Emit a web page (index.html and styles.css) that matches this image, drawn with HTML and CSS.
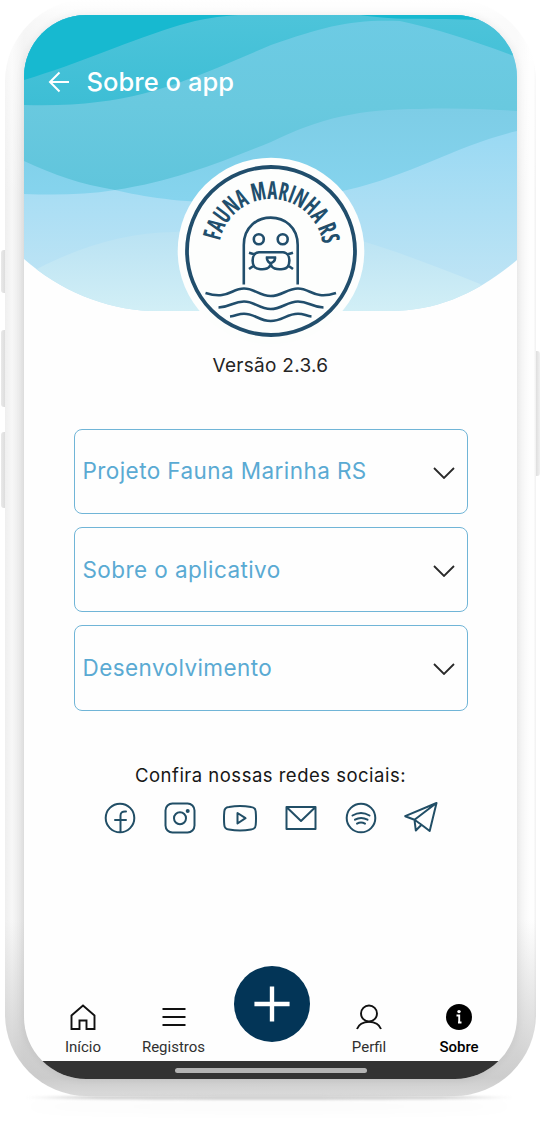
FILE: index.html
```html
<!DOCTYPE html>
<html lang="pt-BR">
<head>
<meta charset="utf-8">
<title>Sobre o app</title>
<link rel="stylesheet" href="styles.css">
</head>
<body>
<div class="phone">
  <i class="key key-mute"></i><i class="key key-up"></i><i class="key key-down"></i><i class="key key-power"></i>
  <div class="frame">
  <div class="screen">
    <header class="hero">
      <svg class="waves" viewBox="24 15 493 297" aria-hidden="true">
        <defs>
          <linearGradient id="mid" x1="0" y1="130" x2="0" y2="300" gradientUnits="userSpaceOnUse"><stop stop-color="#99d9f3"/><stop offset="1" stop-color="#c2e5f5"/></linearGradient>
          <linearGradient id="pale" x1="0" y1="230" x2="0" y2="312" gradientUnits="userSpaceOnUse"><stop stop-color="#b9e2f3"/><stop offset="1" stop-color="#d2eff6"/></linearGradient>
          <linearGradient id="sky" x1="0" y1="108" x2="0" y2="200" gradientUnits="userSpaceOnUse"><stop stop-color="#7dcde6"/><stop offset="1" stop-color="#86d4ee"/></linearGradient>
          <linearGradient id="sea" x1="0" y1="20" x2="0" y2="190" gradientUnits="userSpaceOnUse"><stop stop-color="#6dcbe4"/><stop offset=".5" stop-color="#69c9df"/><stop offset="1" stop-color="#60c5dc"/></linearGradient>
          <linearGradient id="teal" x1="0" y1="15" x2="0" y2="105" gradientUnits="userSpaceOnUse"><stop stop-color="#4dc4da"/><stop offset="1" stop-color="#3dbed5"/></linearGradient>
          <clipPath id="bowl"><path d="M24 15H517V260C478 293 437 311 390 311H150C105 309 60 291 24 259Z"/></clipPath>
        </defs>
        <g clip-path="url(#bowl)">
          <path fill="url(#mid)" d="M24 15H517V312H24Z"/>
          <path fill="url(#pale)" d="M24 276C70 250 122 232 175 232C260 222 325 232 365 242C405 254 445 270 480 284L500 312H24Z"/>
          <path fill="url(#sky)" d="M24 100V194C55 195 85 195 115 190C165 202 245 211 347 190C412 175 458 145 517 131V100Z"/>
          <path fill="url(#sea)" d="M24 15V161C54 175 80 184 115 190C175 181 221 162 271 142C320 118 360 109 420 109C455 108 485 109 517 111V15Z"/>
          <path fill="url(#teal)" d="M24 15V105C118 108 167 88 217 68L271 45C325 26 353 19 400 21C437 29 471 40 517 57V15Z"/>
          <path fill="#17b9d0" d="M24 15V80C78 64 133 39 180 25C200 19 220 16 238 15ZM360 15C400 21 430 18 480 20L490 15Z"/>
        </g>
      </svg>
      <div class="title-row">
        <svg class="back" viewBox="0 0 22 22"><path d="M21 11H2M11.5 1.5 2 11l9.5 9.5"/></svg>
        <h1>Sobre o app</h1>
      </div>
      <svg class="logo" viewBox="177 157 188 188" role="img" aria-label="Fauna Marinha RS">
        <circle cx="271" cy="251" r="93.3" fill="#fdfefd"/>
        <g class="ink">
          <circle cx="271" cy="251" r="84" stroke-width="3.8"/>
          <path d="M243.8 284.5V245C243.8 208.5 297.7 208.5 297.7 245V284.5"/>
          <circle cx="258.8" cy="239.3" r="5"/><circle cx="282.7" cy="239.3" r="5"/>
          <path d="M259 252.2H283C291.5 252.5 291.5 268.7 283 269C277 269.7 271 269 270.7 263C270.4 269 264.5 269.7 259 269C250.5 268.7 250.5 252.5 259 252.2ZM267 257.5H275C275.5 261 272 263 270.8 263C269.5 263 266.5 261 267 257.5ZM249 252.7 255 254.5M249 269 254 265.5M293 252.7 287 254.5M293 269 288 265.5"/>
          <path d="M205.5 293C228 300 231 288.5 244 288.5C255 288.5 259 296 270.7 296C282 296 287 288.5 298 288.5C311 288.5 314 300 336 293M218.5 307.5C231 307 233 301.5 244 301.5C255 301.5 259 309 270.7 309C282 309 287 301.5 298 301.5C309 301.5 311 307 323.5 307.5M230 316.5C236 316 238 313.7 244 313.7C255 313.7 259 321 270.7 321C282 321 287 313.7 298 313.7C304 313.7 306 316 311.5 316.5"/>
        </g>
        <path id="arc" fill="none" d="M220 241A52 52 0 0 1 322 241L325 256"/>
        <text class="logo-text" textLength="146" lengthAdjust="spacingAndGlyphs"><textPath href="#arc">FAUNA MARINHA RS</textPath></text>
      </svg>
    </header>
    <main>
      <p class="version">Versão 2.3.6</p>
      <div class="panels">
        <button class="panel"><span>Projeto Fauna Marinha RS</span><svg class="chev" viewBox="0 0 22 12"><path d="m1 1 10 10L21 1"/></svg></button>
        <button class="panel"><span>Sobre o aplicativo</span><svg class="chev" viewBox="0 0 22 12"><path d="m1 1 10 10L21 1"/></svg></button>
        <button class="panel"><span>Desenvolvimento</span><svg class="chev" viewBox="0 0 22 12"><path d="m1 1 10 10L21 1"/></svg></button>
      </div>
      <p class="follow">Confira nossas redes sociais:</p>
      <div class="social">
        <svg viewBox="0 0 34 34"><circle cx="17" cy="17" r="14.3"/><path d="M17.5 31V14.5Q17.500 10 23 10.500M12 19H23"/></svg>
        <svg viewBox="0 0 34 34"><rect x="2.5" y="2.5" width="29" height="29" rx="7"/><circle cx="17" cy="17.2" r="6"/><circle class="dot" cx="24.7" cy="10" r="2"/></svg>
        <svg viewBox="0 0 34 34"><path d="M6 6Q17 4 28 6Q32.500 6.500 32.700 10.500Q33.300 17 32.700 24Q32.500 28 28 28.500Q17 30.500 6 28.500Q1.500 28 1.300 24Q.7 17 1.300 10.500Q1.500 6.500 6 6ZM14.500 12V22.500L22.500 17.200Z"/></svg>
        <svg viewBox="0 0 34 34"><path d="M2.500 6H31.500V28H2.500ZM3 6.500 17 20 31 6.500"/></svg>
        <svg viewBox="0 0 34 34"><circle cx="17" cy="17" r="14.300"/><path d="M8.500 14.500Q17 9.500 25.500 14.500M11 18.700Q17 15.200 23.500 18.700M13 22.600Q17 20.300 21 22.600"/></svg>
        <svg viewBox="0 0 34 34"><path d="M32.500 2 1.200 15.200 10.500 18.800 32.500 2 25.700 30 17.500 23.700 10.500 18.800 11.800 29.500 17.500 23.700"/></svg>
      </div>
    </main>
    <nav class="tabs">
      <a class="tab"><svg viewBox="0 0 26 26"><path d="M1.500 25V11.500L13 1.500 24.500 11.500V25H16.500V16.500H9.500V25Z"/></svg>Início</a>
      <a class="tab"><svg viewBox="0 0 26 26"><path d="M1.500 5H24.500M1.500 13H24.500M1.500 21H24.500"/></svg>Registros</a>
      <a class="add"><svg viewBox="0 0 40 40"><path d="M20 1.500V38.500M1.500 20H38.500"/></svg></a>
      <a class="tab"><svg viewBox="0 0 26 26"><circle cx="13" cy="9.500" r="8"/><path d="M1 25C4.500 15.500 21.500 15.500 25 25"/></svg>Perfil</a>
      <a class="tab active"><svg viewBox="0 0 26 26"><circle class="disc" cx="13" cy="13" r="13"/><circle class="mark" cx="13" cy="7.600" r="1.700"/><path class="stem" d="M10.500 11.500H13.200V18.500M12 18.500H15.500"/></svg>Sobre</a>
    </nav>
    <div class="system-bar"><i></i></div>
  </div>
  </div>
  <i class="ground"></i>
</div>
</body>
</html>
```

FILE: styles.css
```css
* { box-sizing: border-box; }
body { margin: 0; background: #fff; font-family: Inter, "Liberation Sans", sans-serif; }
h1, p { margin: 0; font-weight: 400; }
.phone { position: relative; width: 542px; height: 1125px; padding-left: 5px; overflow: hidden; }
.frame {
  position: relative; width: 531px; height: 1096px; padding: 15px 19px 17px; border-radius: 82px;
  background:
    linear-gradient(180deg, rgba(255,255,255,1) 0, rgba(255,255,255,.7) 20px, rgba(255,255,255,.5) 60px, rgba(255,255,255,0) 200px),
    linear-gradient(180deg, transparent 920px, rgba(198,198,198,.85) 1078px, rgba(216,216,216,.9) 1096px),
    linear-gradient(90deg, #efefef 0, #f7f7f7 7px, #e5e5e5 19px, #eee 60px, #f2f2f2 500px, #f2f2f2 512px, #fefefe 525px, #fefefe 529px, #f3f3f3 530px);
}
.screen { width: 493px; height: 1064px; border-radius: 62px; overflow: hidden; background: #fefefe; display: flex; flex-direction: column; box-shadow: 0 0 9px rgba(0,0,0,.07); }
.key { position: absolute; left: 1px; width: 5px; border-radius: 3px 0 0 3px; background: linear-gradient(90deg, #e9e9e9, #dadada); }
.key-mute { top: 250px; height: 43px; }
.key-up { top: 330px; height: 77px; }
.key-down { top: 432px; height: 76px; }
.key-power { left: 535px; top: 351px; height: 125px; border-radius: 0 3px 3px 0; background: linear-gradient(90deg, #dadada, #f0f0f0); }
.ground { position: absolute; left: 22px; top: 1095px; width: 494px; height: 5px; border-radius: 50%; background: linear-gradient(90deg, transparent, #d3d3d3 15%, #d3d3d3 85%, transparent); box-shadow: 0 9px 14px rgba(0,0,0,.05); filter: blur(.8px); }

.hero { position: relative; height: 297px; flex: none; }
.waves { display: block; width: 493px; height: 297px; }
.title-row { position: absolute; left: 24px; top: 50px; display: flex; align-items: center; gap: 16.5px; color: #fff; }
.back { width: 22px; height: 22px; fill: none; stroke: #fff; stroke-width: 2; }
.title-row h1 { font-size: 25.5px; line-height: 34px; font-weight: 500; letter-spacing: .05px; }
.logo { position: absolute; left: 153px; top: 142px; width: 188px; height: 188px; }
.ink { fill: none; stroke: #214e6c; stroke-width: 2.6; }
.logo-text { font-family: "Liberation Sans Narrow", "Open Sans", "Noto Sans", sans-serif; font-stretch: 62.5%; font-weight: 700; font-size: 25px; fill: #214e6c; }

main { flex: 1; display: flex; flex-direction: column; align-items: center; }
.version { margin-top: 41px; font-size: 19px; line-height: 26px; letter-spacing: .28px; color: #252525; }
.panels { display: grid; gap: 12.5px; margin-top: 49.5px; width: 394px; }
.panel { height: 85.7px; padding: 0 12px 0 8px; display: flex; align-items: center; justify-content: space-between; border: 1.5px solid #70b5d7; border-radius: 8px; background: none; font: 400 22.5px/30px Inter, sans-serif; letter-spacing: .42px; color: #5aaad3; }
.chev { width: 22px; height: 12px; margin-top: 3px; fill: none; stroke: #292929; stroke-width: 1.8; }
.follow { margin-top: 51px; font-size: 18.5px; line-height: 26px; letter-spacing: .49px; color: #171717; }
.social { display: flex; gap: 26.4px; margin-top: 13px; }
.social svg { width: 34px; height: 34px; fill: none; stroke: #214e66; stroke-width: 2; stroke-linejoin: round; stroke-linecap: round; }
.social .dot { fill: #214e66; stroke: none; }

.tabs { height: 95px; flex: none; display: grid; grid-template-columns: 90px 91px 105px 90px 90px; padding-left: 14px; align-items: end; }
.tab { display: flex; flex-direction: column; align-items: center; gap: 8px; padding-bottom: 4px; font: 400 15px/19px Roboto, sans-serif; color: #303030; }
.tab svg { width: 26px; height: 26px; fill: none; stroke: #111; stroke-width: 1.9; }
.tab.active { color: #000; font-weight: 500; }
.tab .disc { fill: #000; stroke: none; }
.tab .mark { fill: #fff; stroke: none; }
.tab .stem { stroke: #fff; }
.add { align-self: start; justify-self: center; width: 76px; height: 76px; border-radius: 50%; background: #033557; display: grid; place-items: center; }
.add svg { width: 38px; height: 38px; fill: none; stroke: #fff; stroke-width: 4.6; }
.system-bar { height: 18px; flex: none; background: #333; display: grid; justify-content: center; padding-top: 7px; }
.system-bar i { width: 192px; height: 5px; border-radius: 3px; background: #b4b4b4; }
```
